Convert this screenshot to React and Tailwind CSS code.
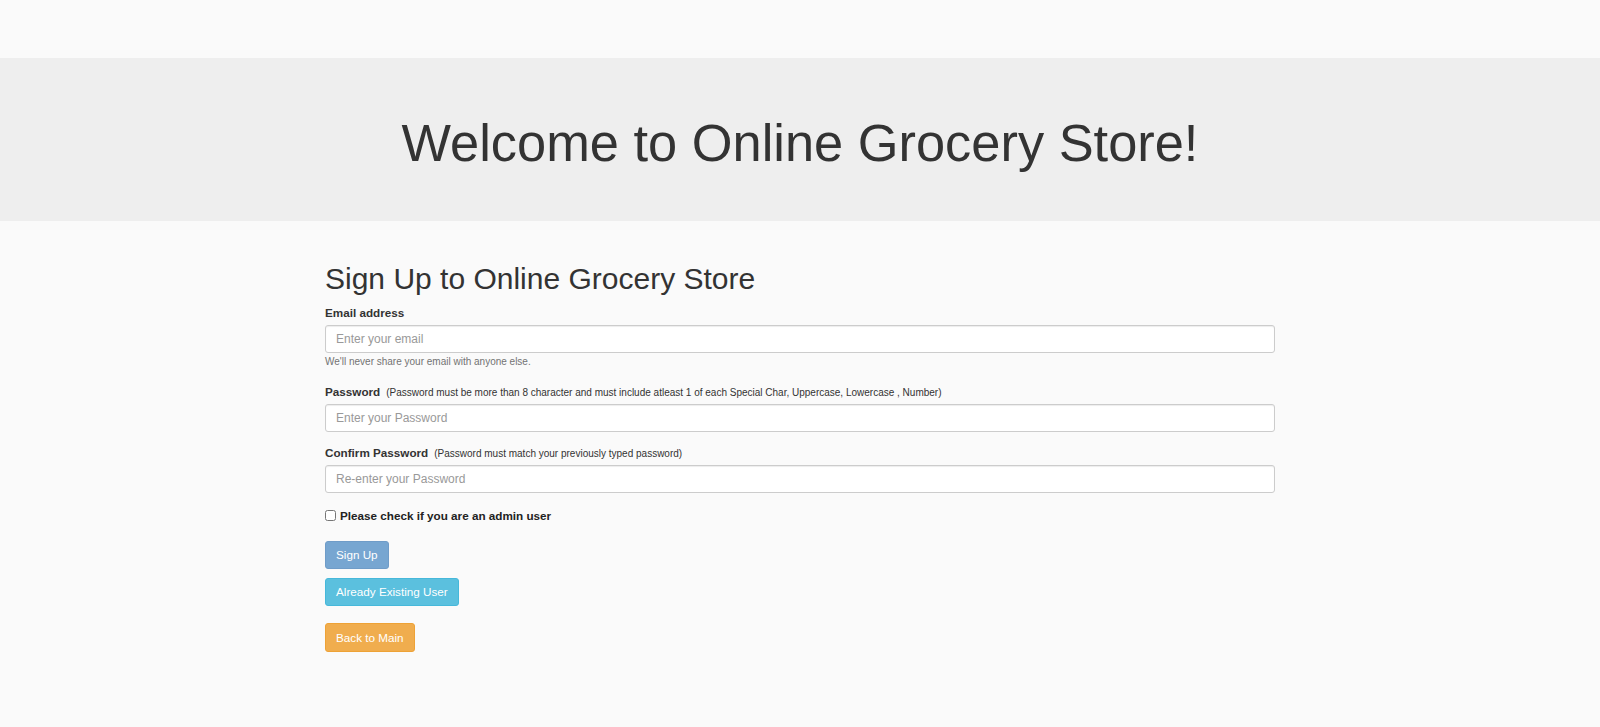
import { useState } from 'react'

const field =
  'block h-[28px] w-full rounded-[3px] border border-[#cccccc] bg-white px-[10px] text-[12px] text-[#555] ' +
  'shadow-[inset_0_1px_1px_rgba(0,0,0,0.075)] outline-none placeholder:text-[#999]'

const label = 'block text-[11.7px] font-bold leading-[17px] text-[#333]'
const note = 'ml-[6px] text-[10px] font-normal text-[#333]'

const btn = 'block h-[28px] rounded-[3px] border px-[10px] text-[11.7px] leading-[26px] text-white'

export default function App() {
  const [admin, setAdmin] = useState(false)

  return (
    <div className="min-h-screen bg-[#fafafa] font-['Liberation_Sans',Arial,sans-serif] text-[#333]">
      <div className="h-[58px]" />

      <div className="bg-[#eeeeee] pb-[48px] pt-[55px] text-center">
        <h1 className="text-[52.4px] font-normal leading-[60px]">Welcome to Online Grocery Store!</h1>
      </div>

      <form className="mx-auto w-[950px] pt-[42px]" onSubmit={(e) => e.preventDefault()}>
        <h2 className="mb-[10px] text-[30px] font-normal leading-[31px]">Sign Up to Online Grocery Store</h2>

        <label className={label}>Email address</label>
        <input type="email" placeholder="Enter your email" className={`${field} mt-[4px]`} />
        <small className="mt-[2px] block text-[10px] leading-[14px] text-[#737373]">
          We'll never share your email with anyone else.
        </small>

        <label className={`${label} mt-[14px]`}>
          Password
          <span className={note}>
            (Password must be more than 8 character and must include atleast 1 of each Special Char, Uppercase,
            Lowercase , Number)
          </span>
        </label>
        <input type="password" placeholder="Enter your Password" className={`${field} mt-[3px]`} />

        <label className={`${label} mt-[12px]`}>
          Confirm Password
          <span className={note}>(Password must match your previously typed password)</span>
        </label>
        <input type="password" placeholder="Re-enter your Password" className={`${field} mt-[3px]`} />

        <label className="mt-[14px] flex items-center gap-[4px] text-[11.7px] font-bold leading-[17px] text-[#222]">
          <input
            type="checkbox"
            checked={admin}
            onChange={(e) => setAdmin(e.target.checked)}
            className="m-0 h-[11px] w-[11px]"
          />
          Please check if you are an admin user
        </label>

        <button type="submit" disabled className={`${btn} mt-[17px] border-[#6f9cc8] bg-[#77a6d1]`}>
          Sign Up
        </button>
        <button type="button" className={`${btn} mt-[9px] border-[#46b8da] bg-[#5bc0de]`}>
          Already Existing User
        </button>
        <button type="button" className={`${btn} mt-[17px] h-[29px] border-[#eea236] bg-[#f0ad4e]`}>
          Back to Main
        </button>
      </form>
    </div>
  )
}
